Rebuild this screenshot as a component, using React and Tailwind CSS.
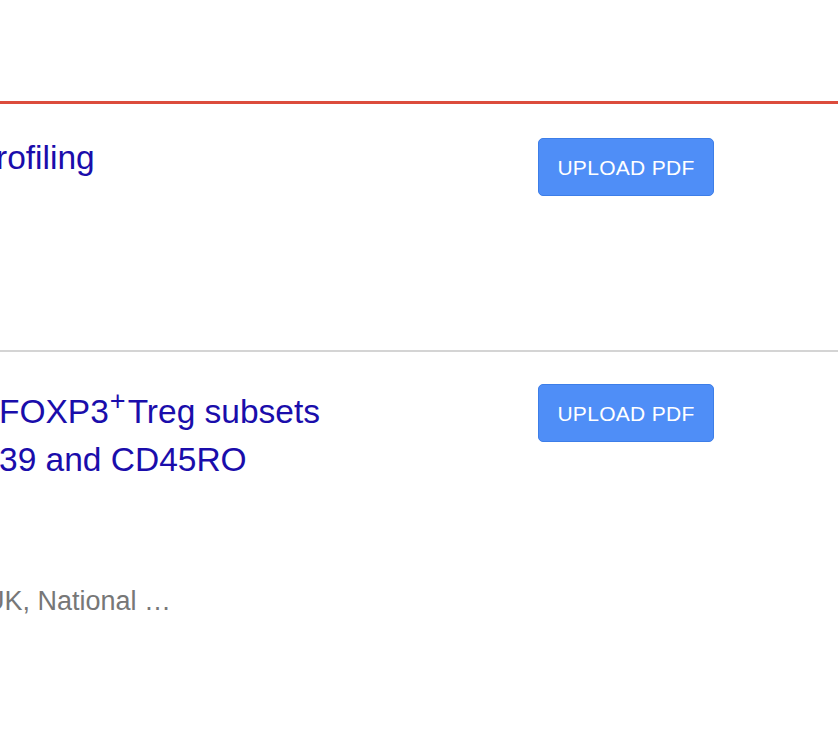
export default function App() {
  const btn =
    "w-[176px] h-[58px] rounded-[5px] bg-[#4f8ef7] border border-[#3d7ee8] text-white text-[21px] leading-none tracking-[0.3px] flex items-center justify-center shrink-0";
  return (
    <div className="w-[838px] h-[744px] bg-white overflow-hidden font-['Liberation_Sans',Arial,sans-serif]">
      <div className="h-[101px]" />
      <div className="h-[3px] bg-[#dc4c3c]" />
      <div className="flex h-[246px]">
        <div className="w-[538px] pt-[30px]">
          <div className="text-[33.5px] leading-[48px] text-[#1a0dab] -ml-[4px]">rofiling</div>
        </div>
        <div className="pt-[34px]">
          <button className={btn}>UPLOAD PDF</button>
        </div>
      </div>
      <div className="h-[2px] bg-[#d4d4d4]" />
      <div className="flex">
        <div className="w-[538px] pt-[36px]">
          <div className="text-[33.5px] leading-[48px] text-[#1a0dab] -ml-[1px]">
            FOXP3<sup className="text-[27px] ml-[1px] mr-[2px]">+</sup>Treg subsets
            <br />
            39 and CD45RO
          </div>
          <div className="mt-[102px] -ml-[15px] text-[27px] leading-[30px] text-[#777777]">
            UK, National …
          </div>
        </div>
        <div className="pt-[32px]">
          <button className={btn}>UPLOAD PDF</button>
        </div>
      </div>
    </div>
  );
}
